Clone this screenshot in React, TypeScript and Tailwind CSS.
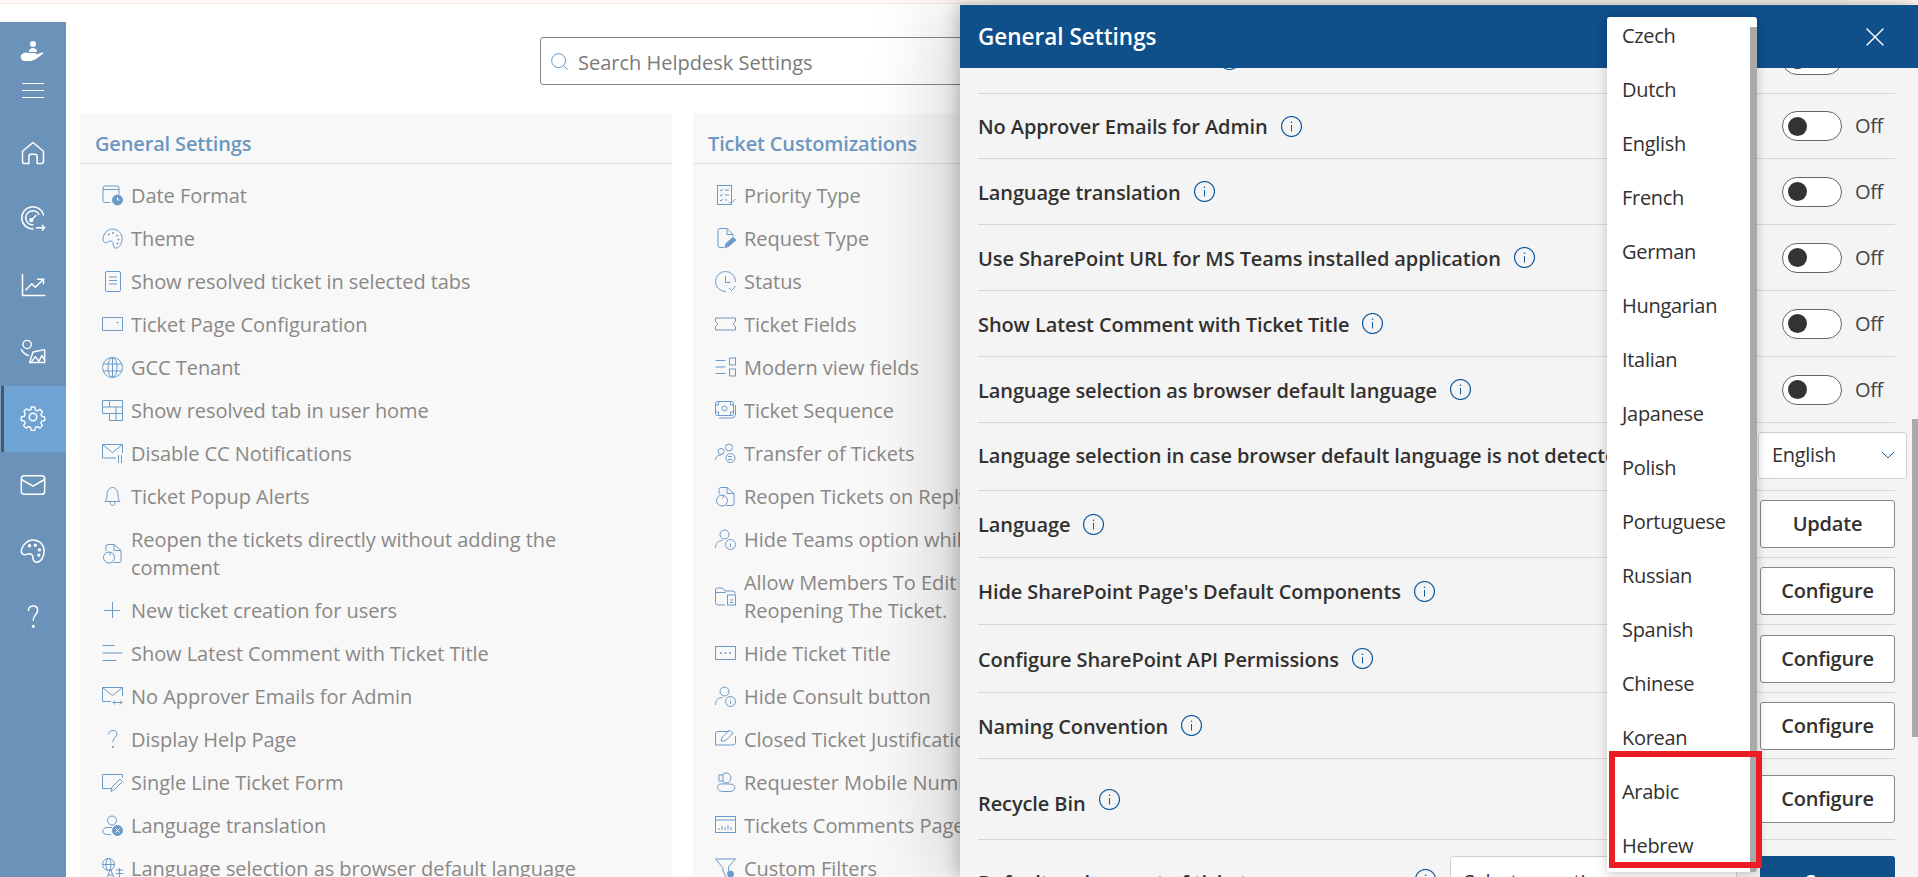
import React from 'react';
import { ChevronDown, Search, X } from 'lucide-react';

const font = { fontFamily: '"Open Sans", "Noto Sans", sans-serif' };

const Ic: React.FC<{ children: React.ReactNode }> = ({ children }) => (
  <svg viewBox="0 0 21 21" fill="none" stroke="currentColor" strokeWidth="1" className="w-[21px] h-[21px] shrink-0 text-[#6b9bc8]">
    {children}
  </svg>
);

const Side: React.FC<{ children: React.ReactNode; sw?: string }> = ({ children, sw = '1.3' }) => (
  <svg viewBox="0 0 24 24" fill="none" stroke="white" strokeWidth={sw} strokeLinecap="round" strokeLinejoin="round" className="w-[28px] h-[28px]">
    {children}
  </svg>
);

// list icons, drawn on a 21 box
const icons: Record<string, React.ReactNode> = {
  date: <><path d="M8 17.500H3a2 2 0 0 1-2-2V3a2 2 0 0 1 2-2h12a2 2 0 0 1 2 2v6" /><path d="M1 4.500h16" /><circle cx="15.500" cy="15" r="5" fill="currentColor" /><path d="M15.500 12.500V15h2" stroke="white" /></>,
  palette: <><path d="M10 1c5.500 0 10 4 10 9.500 0 3.500-1.500 8.500-5 9.500-3 .8-3.800-1.500-3.800-3.500 0-3-1.700-4-3.700-3.300C5 14.800 3 15.500 1.500 13.500-.5 10 3.500 1 10 1z" /><circle cx="7" cy="6.500" r=".6" fill="currentColor" /><circle cx="11" cy="5" r=".6" fill="currentColor" /><circle cx="15" cy="7.500" r=".6" fill="currentColor" /><circle cx="16.500" cy="11.500" r=".6" fill="currentColor" /><circle cx="15.500" cy="15.500" r=".6" fill="currentColor" /></>,
  doc: <><rect x="3.500" y=".5" width="15" height="20" rx="1.500" /><path d="M7 6h8M7 9.500h8M7 13h8" /></>,
  page: <><path d="M.5 3.500h20v13H.5z" /><path d="M14 8h3l-1.500 1.500z" fill="currentColor" stroke="none" /></>,
  globe: <><circle cx="10.500" cy="10.500" r="10" /><ellipse cx="10.500" cy="10.500" rx="4.500" ry="10" /><path d="M1 7h19M1 14h19M10.500 .5v20" /></>,
  table: <><path d="M.5 .5h20v20h-13v-7h-7z" /><path d="M.5 7h20M7.500 .5V7M7.500 13.500h13M14 7v13.500" /></>,
  mailPause: <><path d="M14 15H.5V1.500h20V10" /><path d="M.5 1.500l10 8 10-8" /><path d="M16.500 12v8M19.500 12v8" /></>,
  bell: <><path d="M3 15.500c1.500-1.500 2-3 2-6.500 0-4 2-7.500 5.500-7.500S16 5 16 9c0 3.500.5 5 2 6.500H3z" /><path d="M8 15.500c0 3 1 4 2.500 4s2.500-1 2.500-4" /></>,
  reopen: <><path d="M4 8V3.500a2 2 0 0 1 2-2h6l7 6v10a2 2 0 0 1-2 2h-6" /><path d="M12 1.500v6h7" /><circle cx="7" cy="14.500" r="5.500" /><path d="M7 9l2 1.500L7 12" /></>,
  plus: <path d="M10.500 2v16M2 10.500h16" />,
  lines: <path d="M.5 2.500h12M.5 10h20M.5 17.500h14" />,
  mailSwap: <><path d="M9 15.500H.5V1.500h20V10" /><path d="M.5 1.500l10 8 10-8" /><path d="M11 16.500h9M13 14.500l-2 2 2 2M18 14.500l2 2-2 2" /></>,
  help: <><path d="M6.500 5.500c0-2.500 2-4 4.500-4s4 1.500 4 3.500c0 3-4 4-4 7.500v1" /><circle cx="11" cy="18" r=".7" fill="currentColor" /></>,
  form: <><path d="M9 16.500H.5V2.500h20V6" /><path d="M9 19.500l1-4.500 8-8 2.500 2.500-8 8z" /></>,
  personX: <><circle cx="10" cy="5.500" r="4.500" /><path d="M9 19.500H5c-6 0-5-7 0-7h5" /><circle cx="15.500" cy="15.500" r="5" fill="currentColor" /><path d="M13.500 13.500l4 4M17.500 13.500l-4 4" stroke="white" /></>,
  translate: <><circle cx="6.500" cy="6.500" r="6" /><ellipse cx="6.500" cy="6.500" rx="2.500" ry="6" /><path d="M.5 6.500h12M5 20l3.500-9 3.500 9M6 17h5M14 12h7M17.500 10v10M14 15.500h7" /></>,
  priority: <><rect x="2.500" y=".5" width="14" height="19" /><path d="M5 5l1 1 2-2M5 10l1 1 2-2M5 15l1 1 2-2M10 5h4M10 10h4M10 15h2" /><path d="M14 16.500l2 2 4.500-4.500" /></>,
  request: <><path d="M9 19.500H5a2 2 0 0 1-2-2v-15a2 2 0 0 1 2-2h7l6 6v2" /><path d="M12 .5v6h6" /><path d="M10 20l1-4.500 7-6 3 2.500-7 6z" fill="currentColor" /></>,
  status: <><path d="M11 20.500A10 10 0 1 1 20.500 11" /><path d="M10.500 5v6.500h5" /><path d="M14 17l2.500 2.500 4-4.500" /></>,
  ticket: <path d="M.5 4h20v3.500l-2.500 2.500 2.500 2.500V16H.5v-3.500L3 10 .5 7.500z" />,
  modern: <><path d="M.5 3.500h10M.5 10h10M.5 16.500h10" /><rect x="14.500" y="1" width="6" height="7" /><rect x="14.500" y="12" width="6" height="7" /></>,
  money: <><rect x=".5" y="1.500" width="18" height="14" rx="2" /><circle cx="9.500" cy="8.500" r="2.500" /><path d="M.5 5h3V1.500M15.500 1.500V5h3M.5 12h3v3.500M15.500 15.500V12h3" /><path d="M20.500 5v9a4 4 0 0 1-4 4H4" /></>,
  transfer: <><circle cx="14" cy="4.500" r="3.500" /><circle cx="6" cy="8.500" r="3" /><path d="M.5 17c0-3 2-5 5.500-5" /><circle cx="15.500" cy="15" r="4.500" /><path d="M13 13.500h4M13 16.500h4" /></>,
  personInfo: <><circle cx="9.500" cy="5.500" r="4.500" /><path d="M.5 19c0-5 3-7.500 7-7.500" /><circle cx="15.500" cy="15.500" r="5" /><path d="M15.500 14.500v3.500M15.500 12.500v.5" /></>,
  folder: <><path d="M10 19H3a2.500 2.500 0 0 1-2.500-2.500V4a2 2 0 0 1 2-2h5l2.500 3h8a2 2 0 0 1 2 2v1" /><path d="M.5 6.500h10" /><rect x="12.500" y="9" width="8" height="10" /><path d="M15 14h3M15 16.500h3" /></>,
  dots: <><rect x=".5" y="3.500" width="20" height="13" /><circle cx="6" cy="10" r="1" fill="currentColor" stroke="none" /><circle cx="10.500" cy="10" r="1" fill="currentColor" stroke="none" /><circle cx="15" cy="10" r="1" fill="currentColor" stroke="none" /></>,
  closed: <><path d="M14 2.500H3a2.500 2.500 0 0 0-2.500 2.500v11h17.500a2.500 2.500 0 0 0 2.500-2.500V7" /><path d="M6 12l1-3.500L14.500 1 18 4.500 10 12z" /></>,
  mobile: <><circle cx="11" cy="6" r="5" /><rect x="4" y="3" width="4" height="6" fill="#f8f8f8" /><path d="M6 12h9c7 0 6 7.500 0 7.500H8c-7 0-7-7.500-2-7.500z" /></>,
  chart: <><rect x=".5" y="1.500" width="20" height="16" /><path d="M.5 5h20" /><path d="M4 15v-2M7 15v-4M10 15v-3M13 15v-5M16 15v-3" /></>,
  filter: <><path d="M.5 1h20l-7 8v4M8 13V10L.5 1" /><path d="M8 13l3 6" /><circle cx="15.500" cy="16" r="3" fill="currentColor" /></>,
};

const general: [string, string][] = [
  ['date', 'Date Format'],
  ['palette', 'Theme'],
  ['doc', 'Show resolved ticket in selected tabs'],
  ['page', 'Ticket Page Configuration'],
  ['globe', 'GCC Tenant'],
  ['table', 'Show resolved tab in user home'],
  ['mailPause', 'Disable CC Notifications'],
  ['bell', 'Ticket Popup Alerts'],
  ['reopen', 'Reopen the tickets directly without adding the\ncomment'],
  ['plus', 'New ticket creation for users'],
  ['lines', 'Show Latest Comment with Ticket Title'],
  ['mailSwap', 'No Approver Emails for Admin'],
  ['help', 'Display Help Page'],
  ['form', 'Single Line Ticket Form'],
  ['personX', 'Language translation'],
  ['translate', 'Language selection as browser default language'],
];

const customizations: [string, string][] = [
  ['priority', 'Priority Type'],
  ['request', 'Request Type'],
  ['status', 'Status'],
  ['ticket', 'Ticket Fields'],
  ['modern', 'Modern view fields'],
  ['money', 'Ticket Sequence'],
  ['transfer', 'Transfer of Tickets'],
  ['reopen', 'Reopen Tickets on Reply'],
  ['personInfo', 'Hide Teams option while creating ticket'],
  ['folder', 'Allow Members To Edit Ticket While\nReopening The Ticket.'],
  ['dots', 'Hide Ticket Title'],
  ['personInfo', 'Hide Consult button'],
  ['closed', 'Closed Ticket Justification'],
  ['mobile', 'Requester Mobile Number'],
  ['chart', 'Tickets Comments Page Size'],
  ['filter', 'Custom Filters'],
];

const languages = ['Czech', 'Dutch', 'English', 'French', 'German', 'Hungarian', 'Italian', 'Japanese', 'Polish', 'Portuguese', 'Russian', 'Spanish', 'Chinese', 'Korean', 'Arabic', 'Hebrew'];

const Panel: React.FC<{ title: string; items: [string, string][] }> = ({ title, items }) => (
  <section className="bg-[#f8f8f8] h-[800px]">
    <h2 className="h-[51px] pt-[16px] pl-[15px] border-b border-[#dedede] text-[20px] leading-[30px] font-semibold text-[#6b97c1] tracking-[-0.15px]">{title}</h2>
    <ul className="pt-[10px] pl-[22px]">
      {items.map(([icon, label], i) => (
        <li key={i} className="flex items-center gap-[8px] py-[7.500px] text-[20px] leading-[28px] text-[#8a8886] tracking-[-0.05px] whitespace-pre-line">
          <Ic>{icons[icon]}</Ic>
          <span>{label}</span>
        </li>
      ))}
    </ul>
  </section>
);

const Info = () => (
  <svg viewBox="0 0 21 21" fill="none" stroke="#0f5a9c" className="w-[21px] h-[21px] shrink-0">
    <circle cx="10.500" cy="10.500" r="10" strokeWidth="1.200" />
    <path d="M10.500 9v6.500" strokeWidth="1" />
    <circle cx="10.500" cy="6.300" r=".8" fill="#0f5a9c" stroke="none" />
  </svg>
);

const Toggle = () => (
  <div className="flex items-center gap-[13px] pr-[12px]">
    <span className="w-[60px] h-[30px] rounded-full border border-[#666] bg-white flex items-center pl-[5px]">
      <span className="w-[19px] h-[19px] rounded-full bg-[#333]" />
    </span>
    <span className="text-[20px] text-[#444] tracking-[-0.3px]">Off</span>
  </div>
);

const Btn: React.FC<{ label: string }> = ({ label }) => (
  <button className="w-[135px] h-[48px] rounded-[3px] border border-[#8a8886] bg-white text-[20px] font-semibold text-[#323130] tracking-[-0.2px]">{label}</button>
);

const Row: React.FC<{ label: string; h: string; control: React.ReactNode; offset?: string }> = ({ label, h, control, offset = 'pt-[2px]' }) => (
  <div className={`${h} flex items-center justify-between border-b border-[#d9d4d6]`}>
    <div className="flex items-center gap-[13px] text-[20px] font-semibold text-[#323130] tracking-[-0.1px] whitespace-nowrap">
      <span className={offset}>{label}</span>
      <Info />
    </div>
    {control}
  </div>
);

const App: React.FC = () => (
  <div className="relative h-screen overflow-hidden bg-white" style={font}>
    <div className="h-[4px] bg-[#fff9f7] border-b border-[#fbe6e0]" />

    <div className="flex mt-[18px] h-[855px]">
      {/* Left rail */}
      <nav className="w-[66px] shrink-0 bg-[#6b92b9] flex flex-col items-center">
        <div className="h-[50px] pt-[8px] flex items-center justify-center">
          <svg viewBox="0 0 26 22" className="w-[26px] h-[22px]" fill="white">
            <circle cx="13" cy="4" r="3" />
            <path d="M9 12c0-3 2-4 4-4s4 1 4 4z" />
            <path d="M1 15c3-3 5-3 8-2h6c1 0 2 1 1 2l-3 .5 9-3c2-.5 1.500 1 .5 1.500-6 5-9 7-13 7H4c-2 0-4-3-3-6z" />
          </svg>
        </div>
        <div className="h-[36px] flex items-center justify-center">
          <span className="w-[22px] h-[15px] border-y border-white relative">
            <span className="absolute left-0 right-0 top-[6px] h-px bg-white" />
          </span>
        </div>
        <div className="mt-[12px] h-[66px] flex items-center justify-center">
          <Side><path d="M3 10.500 12 3l9 7.500V19a2 2 0 0 1-2 2h-3.500v-6a2 2 0 0 0-2-2h-3a2 2 0 0 0-2 2v6H5a2 2 0 0 1-2-2z" /></Side>
        </div>
        <div className="h-[66px] flex items-center justify-center">
          <Side><path d="M12 20.500a9.500 9.500 0 1 1 9-12" /><path d="M12 17a6 6 0 1 1 5-9" /><path d="M10.500 13l4-4" /><circle cx="10.500" cy="13" r="1.200" /><path d="M15 19.500h7M20 17.500l2 2-2 2" /></Side>
        </div>
        <div className="h-[66px] flex items-center justify-center">
          <Side><path d="M3 3v18h19" /><path d="M6 16l5-5 3 3 7-7" /><path d="M16 7h5v4" /></Side>
        </div>
        <div className="h-[68px] flex items-center justify-center">
          <Side sw="1.200"><circle cx="7" cy="5.500" r="3.500" /><path d="M2 10c1 2 3 4 6 5" /><path d="M12 12l10-2v11H9l3-9z" /><path d="M11 20l3-4 3 4M17 20l2.500-5 2 3" /></Side>
        </div>
        <div className="relative w-full h-[66px] pb-[4px] bg-[#6fa3d3] flex items-center justify-center">
          <span className="absolute left-[1px] top-0 bottom-0 w-[3px] bg-[#555]" />
          <Side><circle cx="12" cy="12" r="3.200" /><path d="M10.300 2.500h3.400l.6 2.800 1.900.8 2.400-1.500 2.400 2.400-1.500 2.400.8 1.900 2.800.6v3.400l-2.800.6-.8 1.900 1.500 2.400-2.400 2.400-2.400-1.500-1.900.8-.6 2.800h-3.400l-.6-2.800-1.900-.8-2.400 1.500-2.400-2.400 1.500-2.400-.8-1.900-2.800-.6v-3.400l2.800-.6.8-1.900L3.500 6.500l2.400-2.400 2.400 1.500 1.900-.8z" transform="translate(1.200 1.200) scale(.9)" /></Side>
        </div>
        <div className="h-[66px] flex items-center justify-center">
          <Side><rect x="2" y="4" width="20" height="16" rx="2.500" /><path d="M2.500 7.500 12 13l9.500-5.500" /></Side>
        </div>
        <div className="h-[66px] flex items-center justify-center">
          <Side><path d="M12 2.500c5.500 0 9.500 4 9.500 9.500 0 4-2 9-5.500 9.500-3 .4-4-1.500-4-3.500 0-3-2-4-4-3.500-2.500.7-4.500 1.500-5.500-.5-2-4 3.500-11.500 9.500-11.500z" /><circle cx="9" cy="7.500" r=".8" fill="white" /><circle cx="14" cy="7" r=".8" fill="white" /><circle cx="17.500" cy="11" r=".8" fill="white" /><circle cx="17" cy="15.500" r=".8" fill="white" /></Side>
        </div>
        <div className="h-[66px] flex items-center justify-center">
          <Side><path d="M8 6.500C8 4 10 2.500 12.200 2.500S16 4 16 6.300c0 3.500-3.800 4-3.800 8.500" /><circle cx="12.200" cy="20" r=".7" fill="white" /></Side>
        </div>
      </nav>

      {/* Settings page behind the drawer */}
      <main className="flex-1 min-w-0">
        <div className="mt-[15px] mx-auto w-[904px] h-[48px] rounded-[3px] border border-[#8a8886] flex items-center pl-[8px] gap-[8px]">
          <Search size={21} strokeWidth={1.1} className="text-[#5f94c4]" />
          <span className="pt-[3px] text-[20px] text-[#7a7a7a]">Search Helpdesk Settings</span>
        </div>
        <div className="mt-[28px] ml-[14px] grid grid-cols-[592px_592px] gap-x-[21px]">
          <Panel title="General Settings" items={general} />
          <Panel title="Ticket Customizations" items={customizations} />
        </div>
      </main>
    </div>

    {/* General Settings drawer */}
    <aside className="absolute top-[5px] right-0 bottom-0 w-[958px] bg-[#f4f4f4] flex flex-col shadow-[-4px_0_14px_rgba(0,0,0,0.18),-20px_0_70px_rgba(0,0,0,0.16)]">
      <header className="h-[63px] shrink-0 bg-[#0f4f8a] flex items-center justify-between pl-[18px] pr-[27px] z-10">
        <h1 className="text-[22.5px] font-semibold text-white">General Settings</h1>
        <X size={32} strokeWidth={1} color="white" />
      </header>
      <div className="flex-1 overflow-hidden pl-[18px] pr-[23px]">
        <div className="-mt-[42px]">
          <Row h="h-[68px]" label="Disable CC Notifications" control={<Toggle />} />
          <Row h="h-[65px]" label="No Approver Emails for Admin" control={<Toggle />} />
          <Row h="h-[66px]" label="Language translation" control={<Toggle />} />
          <Row h="h-[66px]" label="Use SharePoint URL for MS Teams installed application" control={<Toggle />} />
          <Row h="h-[66px]" label="Show Latest Comment with Ticket Title" control={<Toggle />} />
          <Row h="h-[66px]" label="Language selection as browser default language" control={<Toggle />} />
          <Row
            h="h-[68px]"
            offset="pb-[2px]"
            label="Language selection in case browser default language is not detected"
            control={
              <div className="-mr-[12px] w-[149px] h-[47px] mt-[-3px] shrink-0 rounded-[3px] border border-[#d2d0ce] bg-white flex items-center justify-between pl-[13px] pr-[6px]">
                <span className="text-[20px] text-[#323130] tracking-[-0.3px]">English</span>
                <ChevronDown size={24} strokeWidth={1} className="text-[#0f5a9c]" />
              </div>
            }
          />
          <Row h="h-[67px]" label="Language" control={<Btn label="Update" />} />
          <Row h="h-[67px]" label="Hide SharePoint Page's Default Components" control={<Btn label="Configure" />} />
          <Row h="h-[68px]" label="Configure SharePoint API Permissions" control={<Btn label="Configure" />} />
          <Row h="h-[66px]" label="Naming Convention" control={<Btn label="Configure" />} />
          <Row h="h-[81px]" offset="pt-[9px]" label="Recycle Bin" control={<Btn label="Configure" />} />
          <div className="h-[60px] flex items-start pt-[16px]">
            <div className="w-[458px] pt-[13px] flex items-start justify-between text-[20px] leading-[27px] font-semibold text-[#323130] tracking-[-0.1px] whitespace-nowrap">
              <span>Default assignment of tickets</span>
              <Info />
            </div>
            <div className="w-[287px] h-[48px] ml-[14px] pt-[4px] rounded-[3px] border border-[#d2d0ce] bg-white flex items-center justify-between pl-[13px] pr-[6px] text-[20px] text-[#323130] tracking-[-0.3px]">
              <span>Select an option</span>
              <ChevronDown size={24} strokeWidth={1} className="text-[#0f5a9c]" />
            </div>
            <button className="ml-[23px] w-[135px] h-[48px] pt-[4px] rounded-[3px] bg-[#0f4f8a] text-white text-[20px] font-semibold">Save</button>
          </div>
        </div>
      </div>

      {/* Open language list */}
      <div className="absolute left-[647px] top-[12px] w-[150px] h-[855px] z-20 bg-white rounded-[3px] overflow-hidden shadow-[0_2px_12px_rgba(0,0,0,0.22)]">
        <div className="absolute right-0 top-[10px] bottom-0 w-[7px] bg-[#a9a9a9]" />
        <ul className="-mt-[8px] pl-[15px]">
          {languages.map(lang => (
            <li key={lang} className="h-[54px] flex items-center text-[20px] text-[#323130] tracking-[-0.3px]">{lang}</li>
          ))}
        </ul>
      </div>

      {/* Drawer scrollbar */}
      <div className="absolute right-0 top-[414px] w-[6px] h-[318px] bg-[#a9a9a9]" />

      {/* Annotation around Arabic and Hebrew */}
      <div className="absolute left-[649px] top-[746px] w-[153px] h-[117px] z-30 border-[6px] border-[#ec1c24]" />
    </aside>
  </div>
);

export default App;
